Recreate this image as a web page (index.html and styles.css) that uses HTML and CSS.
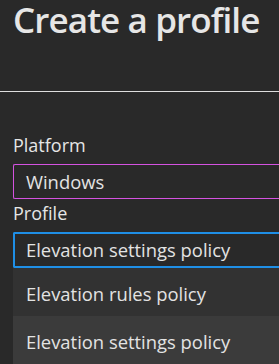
FILE: index.html
```html
<!DOCTYPE html>
<html lang="en">
<head>
<meta charset="utf-8">
<title>Create a profile</title>
<link rel="stylesheet" href="styles.css">
</head>
<body>
<header class="header">
  <h1 class="title">Create a profile</h1>
</header>
<main class="form">
  <label class="label">Platform</label>
  <div class="field field-platform">Windows</div>
  <label class="label">Profile</label>
  <div class="field field-profile">Elevation settings policy</div>
  <ul class="dropdown">
    <li class="option">Elevation rules policy</li>
    <li class="option option-hover">Elevation settings policy</li>
  </ul>
</main>
</body>
</html>
```
FILE: styles.css
```css
html, body {
  margin: 0;
  padding: 0;
  background: #292929;
  color: #e3e3e3;
  font-family: "Open Sans", "Noto Sans", sans-serif;
  overflow: hidden;
}

.header {
  height: 91px;
  border-bottom: 1px solid #dedede;
  padding-left: 13px;
}

.title {
  margin: 0;
  font-size: 35px;
  line-height: 40px;
  font-weight: 600;
  letter-spacing: -0.9px;
  color: #e6e6e6;
  white-space: nowrap;
}

.form {
  display: flex;
  flex-direction: column;
  padding-left: 13px;
  padding-top: 41px;
}

.label {
  display: block;
  font-size: 18px;
  line-height: 24px;
  height: 24px;
  margin-bottom: 7px;
  color: #e6e6e6;
}

.field {
  box-sizing: border-box;
  font-size: 18.4px;
  white-space: nowrap;
  border-radius: 2px 0 0 2px;
  border-right: none;
}

.field-platform {
  height: 35px;
  line-height: 33px;
  border: 1px solid #d452e0;
  border-right: none;
  padding-left: 12px;
  margin-bottom: 2px;
}

.field-profile {
  height: 36px;
  line-height: 32px;
  border: 2px solid #1f8fe6;
  border-right: none;
  padding-left: 11px;
}

.dropdown {
  list-style: none;
  margin: 0;
  padding: 0;
}

.option {
  height: 48px;
  line-height: 52px;
  padding-left: 13px;
  font-size: 18.4px;
  background: #323232;
  color: #e3e3e3;
  white-space: nowrap;
}

.option-hover {
  background: #3b3b3b;
}
```
